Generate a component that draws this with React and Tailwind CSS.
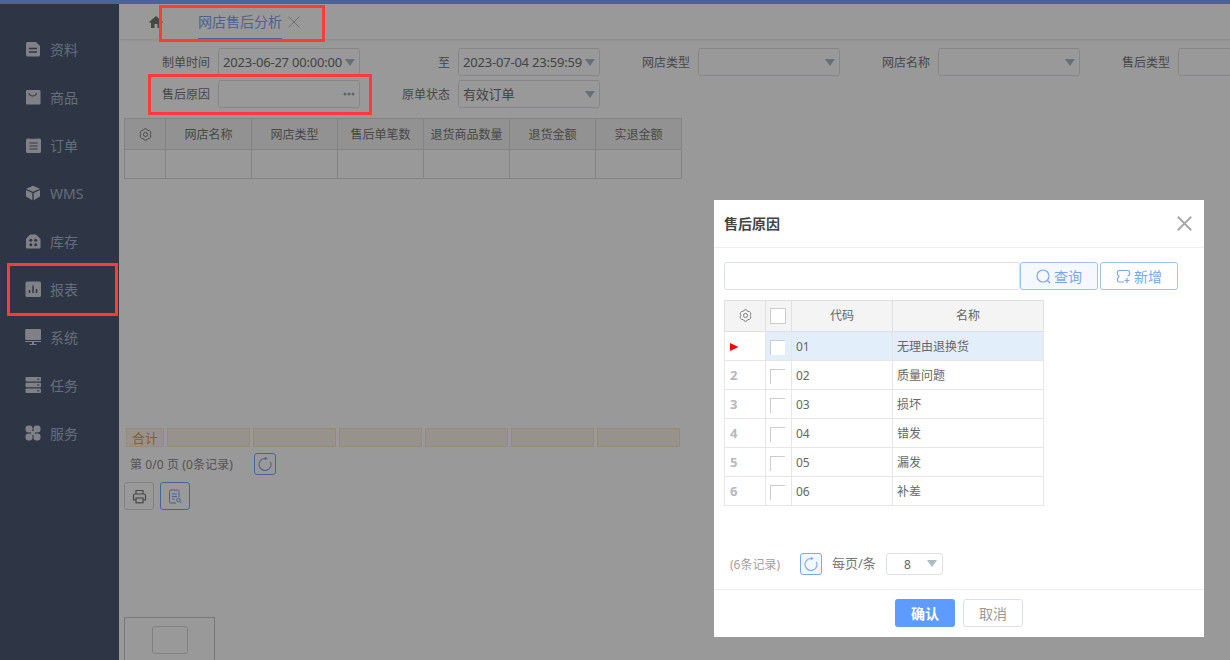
const font = { fontFamily: '"Noto Sans", "Noto Sans CJK SC", sans-serif' }

const navItems = [
  { label: '资料', icon: 'doc' },
  { label: '商品', icon: 'bag' },
  { label: '订单', icon: 'clip' },
  { label: 'WMS', icon: 'box' },
  { label: '库存', icon: 'store' },
  { label: '报表', icon: 'chart' },
  { label: '系统', icon: 'monitor' },
  { label: '任务', icon: 'server' },
  { label: '服务', icon: 'clover' },
]

function NavIcon({ name }) {
  const c = '#d4d8e2'
  const d = '#4e5a73'
  return (
    <svg width="16" height="16" viewBox="0 0 16 16" className="shrink-0">
      {name === 'doc' && (
        <>
          <path d="M1 2.500A1.500 1.500 0 0 1 2.500 1H11l4 4v9a1.500 1.500 0 0 1-1.500 1.500h-11A1.500 1.500 0 0 1 1 14z" fill={c} />
          <path d="M4 7.500h8M4 11h8" stroke={d} strokeWidth="1.500" />
        </>
      )}
      {name === 'bag' && (
        <>
          <rect x="1" y="1" width="14.500" height="14.500" rx="1" fill={c} />
          <path d="M4 4c.5 4 7 4 7.500 0" stroke={d} strokeWidth="1.100" fill="none" />
        </>
      )}
      {name === 'clip' && (
        <>
          <rect x="1" y="1.500" width="15" height="14.500" rx="1.500" fill={c} />
          <path d="M4.500 0.800h8M4.500 6h8M4.500 9h8M4.500 12h8" stroke={d} strokeWidth="1.200" />
        </>
      )}
      {name === 'box' && (
        <>
          <path d="M8 .8 15 3.800 8 6.800 1 3.800z" fill={c} />
          <path d="M1 5v6.500l6.300 3.700V8zM15 5v6.500l-6.300 3.700V8z" fill={c} />
        </>
      )}
      {name === 'store' && (
        <>
          <path d="M1 6 5 1.500h6L15.500 6v8.500a1 1 0 0 1-1 1H2a1 1 0 0 1-1-1z" fill={c} />
          <circle cx="5.800" cy="7.300" r="1.500" fill={d} />
          <circle cx="10.700" cy="7.300" r="1.500" fill={d} />
          <circle cx="5.800" cy="11.800" r="1.500" fill={d} />
          <circle cx="10.700" cy="11.800" r="1.500" fill={d} />
        </>
      )}
      {name === 'chart' && (
        <>
          <rect x=".5" y=".5" width="15.500" height="15.500" rx="1.500" fill={c} />
          <path d="M4.500 12V9M8 12V4.500M11.500 12V8" stroke={d} strokeWidth="1.500" />
        </>
      )}
      {name === 'monitor' && (
        <>
          <rect x=".2" y="0" width="15.800" height="11" rx="1" fill={c} />
          <path d="M.2 12h15.800v1H.2zM7 13h2v2H7zM4.500 15h7v1h-7z" fill={c} />
        </>
      )}
      {name === 'server' && (
        <>
          <rect x=".5" y="0" width="15.500" height="4.500" rx="1" fill={c} />
          <rect x=".5" y="5.800" width="15.500" height="4.500" rx="1" fill={c} />
          <rect x=".5" y="11.500" width="15.500" height="4.500" rx="1" fill={c} />
          <path d="M12 2.200h2.500M12 8h2.500M12 13.800h2.500" stroke={d} strokeWidth="1" />
        </>
      )}
      {name === 'clover' && (
        <>
          <rect x=".5" y=".5" width="7" height="7" rx="3" fill={c} />
          <rect x="8.500" y=".5" width="7" height="7" rx="3" fill={c} />
          <rect x=".5" y="8.500" width="7" height="7" rx="3" fill={c} />
          <rect x="8.500" y="8.500" width="7" height="7" rx="3" fill={c} />
          <rect x="6" y="6" width="4" height="4" fill={c} />
        </>
      )}
    </svg>
  )
}

function Caret({ className = '' }) {
  return (
    <svg width="10" height="7" viewBox="0 0 10 7" className={className}>
      <path d="M0 0h10L5 7z" fill="#abbcc3" />
    </svg>
  )
}

function Gear({ color = '#777' }) {
  return (
    <svg width="13" height="13" viewBox="0 0 14 14" fill="none" stroke={color} strokeWidth="1">
      <path d="M12 7A2.600 2.600 0 0 1 9.500 11.330 2.600 2.600 0 0 1 4.500 11.330 2.600 2.600 0 0 1 2 7 2.600 2.600 0 0 1 4.500 2.670 2.600 2.600 0 0 1 9.500 2.670 2.600 2.600 0 0 1 12 7z" />
      <circle cx="7" cy="7" r="2.200" />
    </svg>
  )
}

function Refresh() {
  return (
    <svg width="14" height="14" viewBox="0 0 14 14" fill="none">
      <path d="M12.300 4.700A6 6 0 1 1 7 1.500" stroke="#84adf5" strokeWidth="1.200" />
      <path d="M6.800 0 9.800 1.500 6.800 3z" fill="#6f9df0" />
    </svg>
  )
}

function DateInput({ value }) {
  return (
    <div className="flex h-[28px] w-[142px] items-center justify-between rounded-[3px] border border-[#dcdfe6] pl-1 pr-[4px] text-[13px] tracking-[-0.2px] whitespace-nowrap text-[#707070]">
      <span className="pt-[2px]">{value}</span>
      <Caret className="shrink-0" />
    </div>
  )
}

function Field({ label, children }) {
  return (
    <div className="flex w-[240px] shrink-0 items-center">
      <div className="w-[90px] pt-[2px] text-right text-[12px] text-[#777]">{label}</div>
      <div className="ml-2">{children}</div>
    </div>
  )
}

const reportColumns = ['网店名称', '网店类型', '售后单笔数', '退货商品数量', '退货金额', '实退金额']

function ReportGrid() {
  return (
    <table className="ml-[4px] mt-[10px] w-[557px] table-fixed border-collapse text-[12px] text-[#777]">
      <colgroup>
        <col className="w-[41px]" />
        {reportColumns.map((c) => <col key={c} className="w-[86px]" />)}
      </colgroup>
      <thead>
        <tr className="h-[31px] bg-[#f4f4f4]">
          <th className="border border-[#ddd] font-normal"><div className="flex justify-center"><Gear /></div></th>
          {reportColumns.map((c) => <th key={c} className="border border-[#ddd] pt-[2px] font-normal whitespace-nowrap">{c}</th>)}
        </tr>
      </thead>
      <tbody>
        <tr className="h-[29px]">
          <td className="border border-[#ddd]" />
          {reportColumns.map((c) => <td key={c} className="border border-[#ddd]" />)}
        </tr>
      </tbody>
    </table>
  )
}

function Page() {
  return (
    <div className="flex h-[660px] w-[1230px] flex-col overflow-hidden bg-white" style={font}>
      <div className="h-1 shrink-0 bg-[#78a9ff]" />
      <div className="flex min-h-0 flex-1">
        <aside className="w-[119px] shrink-0 bg-[#4e5a73] pt-[21px]">
          {navItems.map((item) => (
            <div key={item.label} className="flex h-[48px] items-center gap-[9px] pl-[25px] text-[14px] text-[#a9b7cc]">
              <NavIcon name={item.icon} />
              <span>{item.label}</span>
            </div>
          ))}
        </aside>
        <main className="relative min-w-0 flex-1 pl-px">
          <div className="flex h-[36px] items-start border-b border-[#efefef] shadow-[0_1px_2px_rgba(0,0,0,0.06)]">
            <svg width="14" height="12" viewBox="0 0 14 12" className="ml-[29px] mt-[12px]">
              <path d="M7 0 0 6l1 1 1-.8V12h3.500V8h3v4H12V6.200l1 .8 1-1z" fill="#777" />
            </svg>
            <div className="ml-[35px] flex h-[36px] items-center">
              <div className="relative flex h-[34px] items-center pb-[2px] text-[14px] text-[#7aa5f5]">
                网店售后分析
                <div className="absolute bottom-0 left-0 right-0 h-px bg-[#78a9ff]" />
              </div>
              <svg width="12" height="12" viewBox="0 0 12 12" className="ml-[6px]">
                <path d="m.5.500 11 11M11.500.500l-11 11" stroke="#bbb" strokeWidth="1" />
              </svg>
            </div>
          </div>

          <div className="mt-2 flex flex-col gap-1">
            <div className="flex">
              <Field label="制单时间"><DateInput value="2023-06-27 00:00:00" /></Field>
              <Field label="至"><DateInput value="2023-07-04 23:59:59" /></Field>
              <Field label="网店类型"><DateInput value="" /></Field>
              <Field label="网店名称"><DateInput value="" /></Field>
              <Field label="售后类型"><DateInput value="" /></Field>
            </div>
            <div className="flex">
              <Field label="售后原因">
                <div className="flex h-[28px] w-[142px] items-center justify-end rounded-[3px] border border-[#dcdfe6] pr-1">
                  <svg width="12" height="4" viewBox="0 0 12 4">
                    <circle cx="2" cy="2" r="1.500" fill="#99aab0" />
                    <circle cx="6" cy="2" r="1.500" fill="#99aab0" />
                    <circle cx="10" cy="2" r="1.500" fill="#99aab0" />
                  </svg>
                </div>
              </Field>
              <Field label="原单状态"><DateInput value="有效订单" /></Field>
            </div>
          </div>

          <ReportGrid />

          <div className="ml-[6px] mt-[249px] flex h-[19px] gap-[3px]">
            <div className="flex w-[38px] items-center justify-center border border-[#fbe8cc] bg-[#fcf6ea] pt-[3px] text-[13px] text-[#f59340]">合计</div>
            {[0, 1, 2, 3, 4, 5].map((i) => (
              <div key={i} className="w-[83px] border border-[#fbe8cc] bg-[#fcf6ea]" />
            ))}
          </div>

          <div className="ml-[10px] mt-[6px] flex h-[22px] items-center">
            <span className="w-[124px] pt-[2px] text-[12px] tracking-[0.1px] text-[#8c8c8c]">第 0/0 页 (0条记录)</span>
            <button className="flex h-[22px] w-[22px] items-center justify-center rounded-[3px] border border-[#78a9ff]"><Refresh /></button>
          </div>

          <div className="ml-[4px] mt-[7px] flex gap-[6px]">
            <button className="flex h-[28px] w-[30px] items-center justify-center rounded-[3px] border border-[#d8d8d8]">
              <svg width="15" height="15" viewBox="0 0 15 15" fill="none" stroke="#777" strokeWidth="1.200">
                <path d="M4 5V1.500h7V5M4 11H1.500V6.500a1.500 1.500 0 0 1 1.500-1.500h9a1.500 1.500 0 0 1 1.500 1.500V11H11" />
                <rect x="4" y="9" width="7" height="4.800" />
              </svg>
            </button>
            <button className="flex h-[28px] w-[30px] items-center justify-center rounded-[3px] border border-[#78a9ff]">
              <svg width="15" height="15" viewBox="0 0 15 15" fill="none" strokeWidth="1">
                <path d="M8 14H3a1.500 1.500 0 0 1-1.500-1.500v-10A1.500 1.500 0 0 1 3 1h6.500A1.500 1.500 0 0 1 11 2.500V8" stroke="#8f96ef" />
                <path d="M4 5h5M4 7.500h5M4 10h2.500" stroke="#7aa5f5" />
                <circle cx="10.500" cy="11" r="1.800" stroke="#7aa5f5" />
                <path d="m12 12.500 1.500 1.500" stroke="#7aa5f5" />
              </svg>
            </button>
          </div>

          <div className="ml-[4px] mt-[107px] flex h-[60px] w-[91px] justify-center border border-[#c8c8c8] pt-2">
            <div className="h-[28px] w-[36px] rounded-[3px] border border-[#d8d8d8]" />
          </div>
        </main>
      </div>
    </div>
  )
}

const reasons = [
  ['01', '无理由退换货'],
  ['02', '质量问题'],
  ['03', '损坏'],
  ['04', '错发'],
  ['05', '漏发'],
  ['06', '补差'],
]

function ReasonTable() {
  return (
    <table className="mt-[10px] w-[319px] table-fixed border-collapse text-[12px] text-[#666]">
      <colgroup>
        <col className="w-[41px]" />
        <col className="w-[26px]" />
        <col className="w-[101px]" />
        <col className="w-[151px]" />
      </colgroup>
      <thead>
        <tr className="h-[31px] bg-[#f4f4f4]">
          <th className="border border-[#e0e0e0] font-normal"><div className="flex -translate-y-[1px] justify-center"><Gear /></div></th>
          <th className="border border-[#e0e0e0] font-normal"><div className="mx-auto h-[16px] w-[16px] -translate-x-px border border-[#ccc] bg-white" /></th>
          <th className="border border-[#e0e0e0] font-normal">代码</th>
          <th className="border border-[#e0e0e0] font-normal">名称</th>
        </tr>
      </thead>
      <tbody>
        {reasons.map(([code, name], i) => (
          <tr key={code} className={`h-[29px] ${i === 0 ? 'bg-[#e3eefb]' : ''}`}>
            <td className={`border border-[#e6e6e6] pl-[5px] pt-[2px] text-[13px] font-bold text-[#b5b8bd] ${i === 0 ? 'bg-white' : ''}`}>
              {i === 0 ? (
                <svg width="9" height="8" viewBox="0 0 9 8"><path d="M0 0l8.500 4L0 8z" fill="#f00" /></svg>
              ) : i + 1}
            </td>
            <td className="border border-[#e6e6e6]">
              <div className={`ml-[4px] mt-[2px] h-[15px] w-[15px] border-l border-t border-[#ccc] ${i === 0 ? 'bg-white' : ''}`} />
            </td>
            <td className="border border-[#e6e6e6] pl-1 pt-[2px]">{code}</td>
            <td className="border border-[#e6e6e6] pl-1 pt-[2px]">{name}</td>
          </tr>
        ))}
      </tbody>
    </table>
  )
}

function ReasonDialog() {
  return (
    <div className="absolute left-[714px] top-[200px] flex h-[437px] w-[490px] flex-col bg-white" style={font}>
      <div className="flex h-[48px] shrink-0 items-center justify-between border-b border-[#eee] pl-[10px] pr-[12px]">
        <span className="text-[14px] font-bold text-[#444]">售后原因</span>
        <svg width="15" height="15" viewBox="0 0 15 15">
          <path d="m.8.800 13.400 13.400M14.200.800.800 14.200" stroke="#a8a8a8" strokeWidth="2" />
        </svg>
      </div>
      <div className="flex-1 pl-[10px] pt-[14px]">
        <div className="flex h-[28px]">
          <div className="w-[296px] rounded-[3px] border border-[#dcdfe6]" />
          <button className="flex w-[78px] items-center justify-center gap-[3px] rounded-[3px] border border-[#9dc1f8] bg-[#f5f9ff] text-[14px] text-[#7aa5f5]">
            <svg width="15" height="15" viewBox="0 0 15 15" fill="none" stroke="#7aa5f5" strokeWidth="1.200">
              <circle cx="7" cy="7" r="6" />
              <path d="m11.500 11.500 2.500 2.500" />
            </svg>
            查询
          </button>
          <button className="ml-[2px] flex w-[78px] items-center justify-center gap-[3px] rounded-[3px] border border-[#9dc1f8] text-[14px] text-[#7aa5f5]">
            <svg width="15" height="15" viewBox="0 0 15 15" fill="none" stroke="#7aa5f5" strokeWidth="1.200">
              <path d="M8 13H3a1.500 1.500 0 0 1-1.500-1.500V9A1.500 1.500 0 0 0 3 7.500 1.500 1.500 0 0 0 1.500 6V3A1.500 1.500 0 0 1 3 1.500h9A1.500 1.500 0 0 1 13.500 3v3A1.500 1.500 0 0 0 12 7.500" />
              <path d="M11 9v5M8.500 11.500h5" />
            </svg>
            新增
          </button>
        </div>
        <ReasonTable />
        <div className="ml-[6px] mt-[47px] flex h-[22px] items-center text-[12px]">
          <span className="w-[70px] pt-[2px] text-[#a0a0a0]">(6条记录)</span>
          <button className="flex h-[22px] w-[22px] items-center justify-center rounded-[3px] border border-[#78a9ff] bg-[#f2f6ff]"><Refresh /></button>
          <span className="ml-[10px] w-[54px] text-[13px] text-[#777]">每页/条</span>
          <div className="relative flex h-[22px] w-[57px] items-center rounded-[3px] border border-[#dcdfe6] pl-[17px] pt-[2px] text-[#666]">
            8
            <Caret className="absolute right-[5px] top-[6px]" />
          </div>
        </div>
      </div>
      <div className="flex h-[48px] shrink-0 items-center justify-center gap-2 border-t border-[#eee] pb-[2px]">
        <button className="h-[28px] w-[60px] rounded-[3px] bg-[#5e9bff] pt-[2px] text-[14px] font-bold text-white">确认</button>
        <button className="h-[28px] w-[60px] rounded-[3px] border border-[#dcdfe6] pt-[2px] text-[14px] text-[#999]">取消</button>
      </div>
    </div>
  )
}

export default function App() {
  return (
    <div className="relative h-[660px] w-[1230px] overflow-hidden">
      <Page />
      <div className="absolute inset-0 bg-black/40" />
      <ReasonDialog />
      {/* red markup boxes drawn on top of the screenshot */}
      <div className="absolute left-[159px] top-[5px] h-[37px] w-[166px] border-[3px] border-[#ff3b3b]" />
      <div className="absolute left-[148px] top-[74px] h-[41px] w-[224px] border-[3px] border-[#ff3b3b]" />
      <div className="absolute left-[7px] top-[263px] h-[53px] w-[111px] border-[3px] border-[#ff3b3b]" />
    </div>
  )
}
